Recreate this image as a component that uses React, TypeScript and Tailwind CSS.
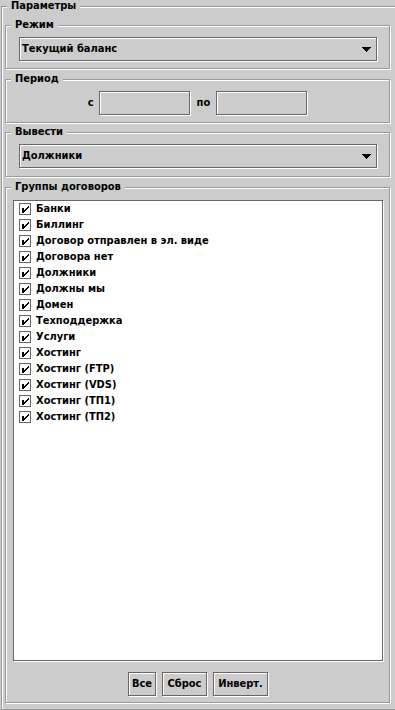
import type { ReactNode } from "react";

const etched = "shadow-[inset_1px_1px_0_#fff,1px_1px_0_#fff]";

const groups = [
  "Банки",
  "Биллинг",
  "Договор отправлен в эл. виде",
  "Договора нет",
  "Должники",
  "Должны мы",
  "Домен",
  "Техподдержка",
  "Услуги",
  "Хостинг",
  "Хостинг (FTP)",
  "Хостинг (VDS)",
  "Хостинг (ТП1)",
  "Хостинг (ТП2)",
];

function Titled({ title, className, children }: { title: string; className: string; children?: ReactNode }) {
  return (
    <div className={`relative border border-[#999] ${etched} ${className}`}>
      <span className="absolute left-[5px] top-[-8px] bg-[#cccccc] px-[4px] text-[11px] leading-[14px] font-bold text-black">
        {title}
      </span>
      {children}
    </div>
  );
}

function Combo({ value }: { value: string }) {
  return (
    <div className={`flex h-[24px] w-[358px] items-center justify-between border border-[#666] pl-[2px] pr-[5px] ${etched}`}>
      <span className="text-[11px] font-bold text-black">{value}</span>
      <svg width="10" height="5" viewBox="0 0 10 5" shapeRendering="crispEdges">
        <polygon points="0,0 10,0 5,5" fill="#000" />
      </svg>
    </div>
  );
}

function CheckIcon() {
  const px = [
    [9, 3], [8, 4], [7, 5], [6, 6], [5, 7],
    [9, 4], [8, 5], [7, 6], [6, 7], [5, 8],
  ];
  return (
    <svg width="13" height="13" viewBox="0 0 13 13" shapeRendering="crispEdges" className="shrink-0">
      <rect x="0.5" y="0.5" width="11" height="11" fill="#fff" stroke="#666" />
      <rect x="3" y="5" width="2" height="5" fill="#000" />
      {px.map(([x, y], i) => (
        <rect key={i} x={x} y={y} width="1" height="1" fill="#000" />
      ))}
    </svg>
  );
}

function Button({ label, w }: { label: string; w: string }) {
  return (
    <button className={`flex h-[24px] ${w} items-center justify-center border border-[#666] bg-[#cccccc] text-[11px] font-bold text-black ${etched}`}>
      {label}
    </button>
  );
}

export default function App() {
  return (
    <div className="h-[710px] w-[395px] overflow-hidden bg-[#cccccc] font-['DejaVu_Sans',sans-serif] font-stretch-semi-condensed text-black">
      <Titled title="Параметры" className="ml-[1px] mt-[6px] h-[704px] w-[400px] pl-[3px]">
        <div className="flex flex-col">
          {/* режим */}
          <Titled title="Режим" className="mt-[18px] h-[44px] w-[385px] pl-[13px] pt-[11px]">
            <Combo value="Текущий баланс" />
          </Titled>

          {/* период */}
          <Titled title="Период" className="mt-[10px] h-[44px] w-[385px] pt-[11px]">
            <div className="flex items-center justify-center text-[11px] font-bold">
              <span>с</span>
              <div className={`ml-[5px] h-[24px] w-[91px] border border-[#666] ${etched}`} />
              <span className="ml-[7px]">по</span>
              <div className={`ml-[6px] h-[24px] w-[91px] border border-[#666] ${etched}`} />
            </div>
          </Titled>

          {/* вывести */}
          <Titled title="Вывести" className="mt-[9px] h-[45px] w-[385px] pl-[13px] pt-[11px]">
            <Combo value="Должники" />
          </Titled>

          {/* группы */}
          <Titled title="Группы договоров" className="mt-[10px] h-[516px] w-[385px] pl-[7px] pt-[12px]">
            <div className="h-[461px] w-[370px] border border-[#666] bg-white shadow-[1px_1px_0_#fff]">
              {groups.map((g) => (
                <div key={g} className="flex h-[16px] items-center pl-[5px]">
                  <CheckIcon />
                  <span className="ml-[4px] whitespace-nowrap text-[11px] font-bold">{g}</span>
                </div>
              ))}
            </div>
            <div className="mt-[11px] flex justify-center gap-[6px] pr-[6px]">
              <Button label="Все" w="w-[28px]" />
              <Button label="Сброс" w="w-[45px]" />
              <Button label="Инверт." w="w-[55px]" />
            </div>
          </Titled>
        </div>
      </Titled>
    </div>
  );
}
